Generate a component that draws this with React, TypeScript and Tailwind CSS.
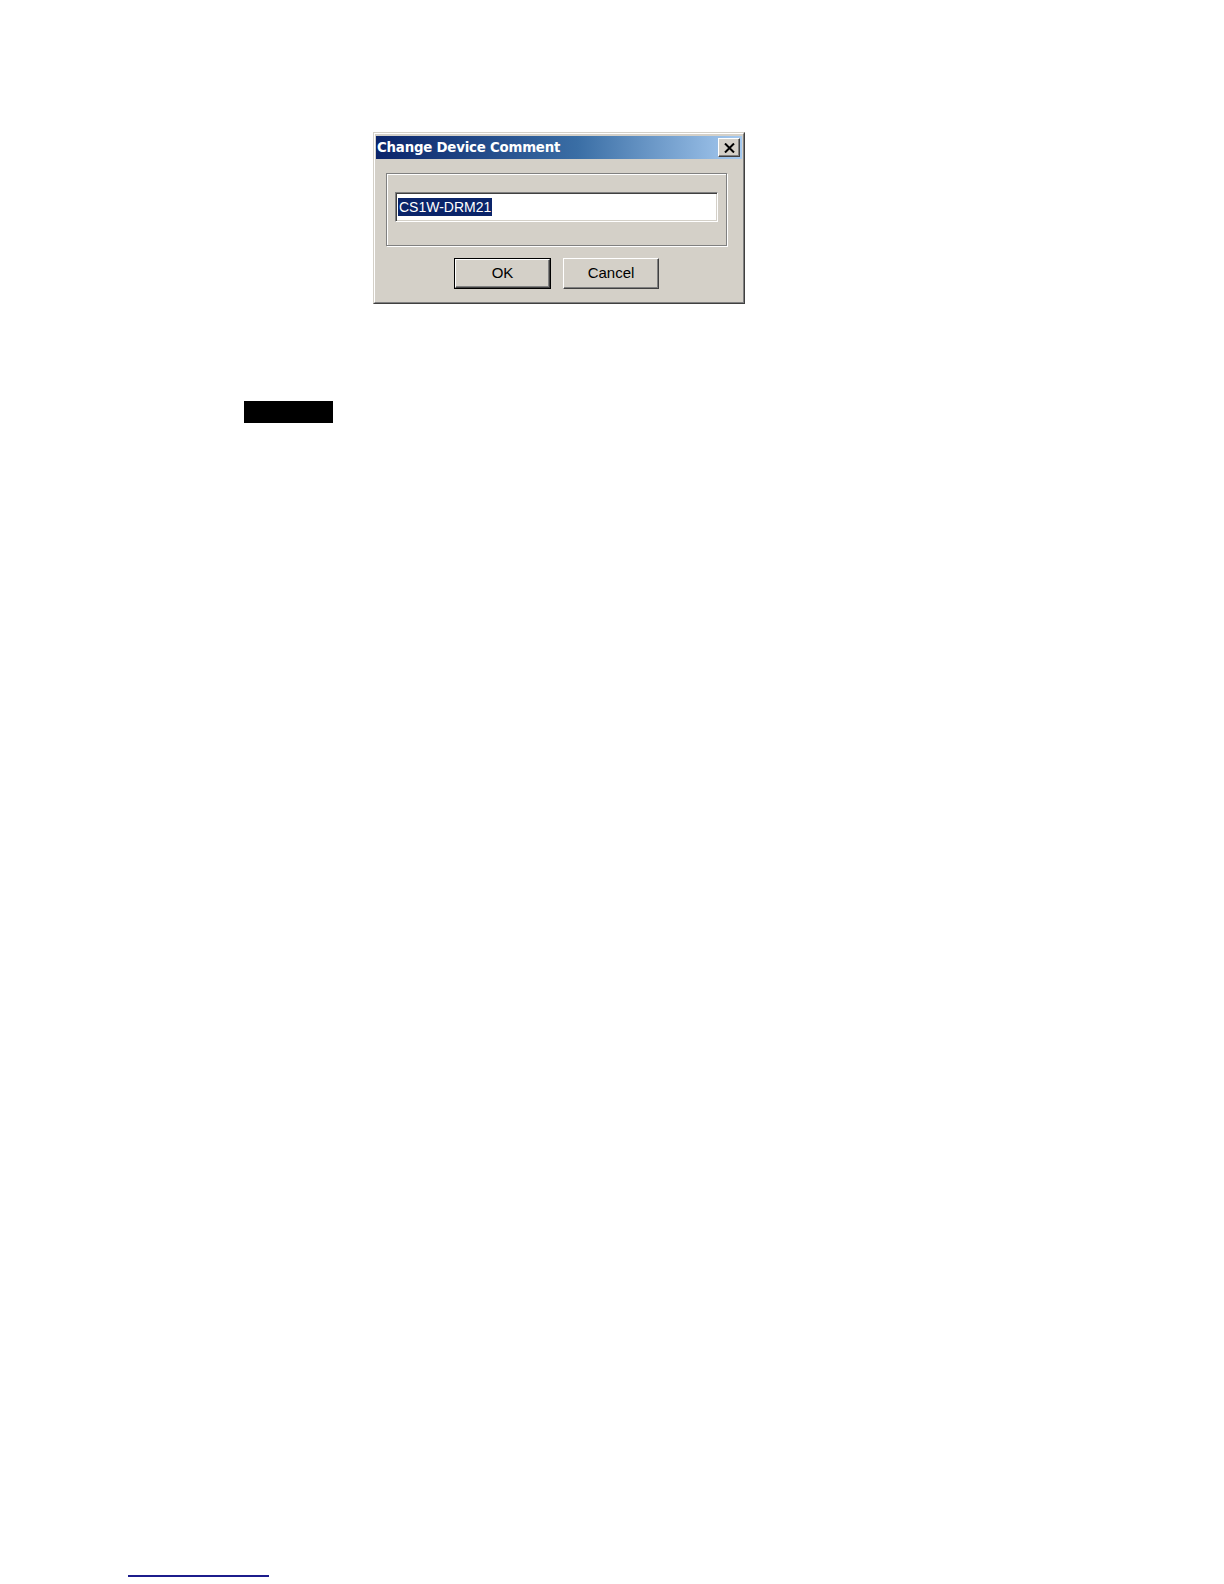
import React from "react";

const raised =
  "border border-t-white border-l-white border-r-[#404040] border-b-[#404040] shadow-[inset_-1px_-1px_0_#808080]";

export default function App() {
  return (
    <div className="w-[1224px] h-[1584px] bg-white flex flex-col" style={{ fontFamily: '"Liberation Sans", Arial, sans-serif' }}>
      {/* Dialog */}
      <div className="ml-[373px] mt-[132px] w-[372px] h-[172px] bg-[#d4d0c8] border border-t-[#d4d0c8] border-l-[#d4d0c8] border-r-[#404040] border-b-[#404040] flex flex-col">
        <div className="flex-1 flex flex-col border border-t-white border-l-white border-r-[#808080] border-b-[#808080] px-[1px] pt-[2px]">
          {/* Title bar */}
          <div className="h-[23px] flex items-center justify-between pl-[1px] pr-[2px] bg-[linear-gradient(to_right,#0a246a_0%,#3a6ea5_55%,#a6caf0_100%)]">
            <span
              className="text-white font-bold text-[14.8px] leading-none tracking-[-0.2px]"
              style={{ fontFamily: '"DejaVu Sans Condensed", "DejaVu Sans", sans-serif' }}
            >
              Change Device Comment
            </span>
            <div className={`w-[22px] h-[19px] bg-[#d4d0c8] flex items-center justify-center ${raised}`}>
              <svg width="11" height="10" viewBox="0 0 11 10">
                <path d="M1 0.5 L10 9.5 M10 0.5 L1 9.5" stroke="#000" strokeWidth="2" />
              </svg>
            </div>
          </div>

          {/* Group box */}
          <div className="mt-[14px] ml-[10px] w-[341px] h-[73px] border border-[#808080] shadow-[inset_1px_1px_0_#fff,1px_1px_0_#fff] pt-[18px] px-[8px]">
            <div className="h-[30px] bg-white border border-t-[#808080] border-l-[#808080] border-r-white border-b-white shadow-[inset_1px_1px_0_#404040,inset_-1px_-1px_0_#d4d0c8] flex items-center pl-[2px]">
              <span className="bg-[#0a246a] text-white text-[14px] leading-[18px] px-[1px]">CS1W-DRM21</span>
            </div>
          </div>

          {/* Buttons */}
          <div className="mt-[12px] ml-[78px] flex gap-[12px]">
            <div className="w-[97px] h-[31px] border border-black">
              <div className={`w-full h-full flex items-center justify-center text-[15px] text-black ${raised}`}>OK</div>
            </div>
            <div className={`w-[96px] h-[31px] flex items-center justify-center text-[15px] text-black ${raised}`}>Cancel</div>
          </div>
        </div>
      </div>

      {/* Black box */}
      <div className="ml-[244px] mt-[97px] w-[89px] h-[22px] bg-black" />

      {/* Blue line */}
      <div className="ml-[128px] mt-[1152px] w-[141px] h-[2px] bg-[#1c1c8c]" />
    </div>
  );
}
